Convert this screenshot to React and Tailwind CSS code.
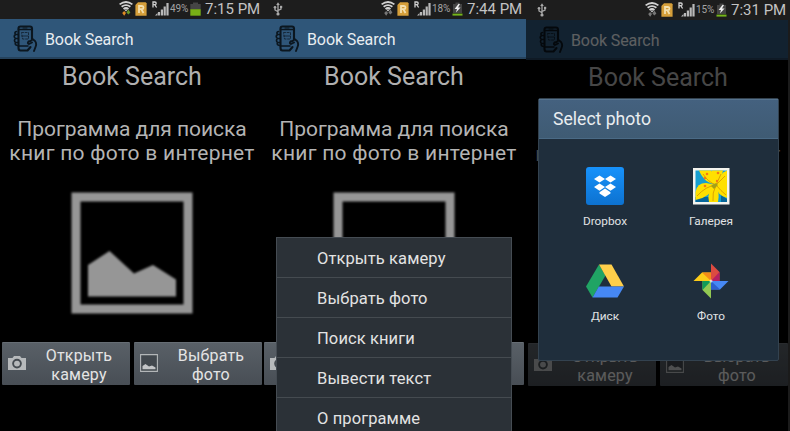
import React from "react";

const roboto = "font-[Roboto,'Noto_Sans',sans-serif]";

function UsbIcon() {
  return (
    <svg className="h-[14px] w-[10px]" viewBox="0 0 10 14" fill="none" stroke="#a9a9a9" strokeWidth="1.3">
      <path d="M5 12V2M5 9.800L2 8V5.500M5 8.500L8 7V5" />
      <path d="M5 0.300L6.800 3H3.200Z" fill="#a9a9a9" stroke="none" />
      <circle cx="5" cy="12" r="1.6" fill="#a9a9a9" stroke="none" />
      <circle cx="2" cy="5.2" r="1.3" fill="#a9a9a9" stroke="none" />
      <path d="M7 3.800H9.200V6H7Z" fill="#a9a9a9" stroke="none" />
    </svg>
  );
}

function WifiIcon({ active }) {
  return (
    <svg className="h-[15px] w-[14px]" viewBox="0 0 14 15" fill="none" stroke="#d2d2d2" strokeWidth="1.8">
      <path d="M0.600 3.400Q7 -1.400 13.400 3.400" />
      <path d="M2.600 5.800Q7 2.400 11.400 5.800" />
      <path d="M4.500 8Q7 6 9.500 8" />
      <path d="M5.300 8.600L7 10.600L8.700 8.600Z" fill="#d2d2d2" stroke="none" />
      <path d="M3.200 12L5.200 14.800L7 12L5.200 10Z" fill={active ? "#e08a24" : "#777"} stroke="none" />
      <path d="M7.400 11.500L9.400 8.500L11.400 11.500L9.400 13.500Z" fill={active ? "#67982a" : "#777"} stroke="none" />
    </svg>
  );
}

function SimIcon() {
  return (
    <svg className="h-[14px] w-[12px]" viewBox="0 0 12 14">
      <path d="M3 0.300H10.600L11.600 1.300V13.700H0.400V3Z" fill="#d69f3a" />
      <path d="M4 11V4H7Q8.500 4 8.500 5.600Q8.500 7.200 7 7.200H4M6.500 7.500L8.500 11" fill="none" stroke="#f3dfae" strokeWidth="1.8" />
    </svg>
  );
}

function SignalIcon() {
  return (
    <svg className="h-[15px] w-[17px]" viewBox="0 0 17 15">
      <path d="M1 6.500V1H2.900Q4.200 1 4.200 2.300Q4.200 3.700 2.900 3.700H1M2.800 3.700L4.600 6.500" fill="none" stroke="#cfcfcf" strokeWidth="1.3" />
      <g fill="#b9b9b9">
        <path d="M3 14.500L5.500 12V14.500Z" />
        <path d="M5.900 11H8.100V14.500H5.900Z" />
        <path d="M8.800 8.500H11V14.500H8.800Z" />
        <path d="M11.600 5.500H13.800V14.500H11.600Z" />
        <path d="M14.400 2H16.600V14.500H14.400Z" />
      </g>
    </svg>
  );
}

function BatteryIcon({ charging }) {
  if (charging) {
    return (
      <svg className="h-[14px] w-[11px]" viewBox="0 0 11 14">
        <path d="M3.500 0.500H7.500V2H10V11H1V2H3.500Z" fill="#444" />
        <path d="M0.500 11.600H10.500V13.600H0.500Z" fill="#76b51b" />
        <path d="M6.600 1.800L2.600 6.900H5L3.900 10.600L8.600 5.500H6L8 2Z" fill="#eee" />
      </svg>
    );
  }
  return (
    <svg className="h-[14px] w-[11px]" viewBox="0 0 11 14">
      <path d="M3 0.400H8V2H10.700V7.500H0.300V2H3Z" fill="#454545" />
      <path d="M0.300 7.200H10.700V13.700H0.300Z" fill="#78b016" />
    </svg>
  );
}

function StatusBar({ percent, time, charging }) {
  return (
    <div className="flex h-[19px] shrink-0 items-start bg-[#1d1d1d] pl-[11px]">
      <div className="mt-[2px] w-[108px]">{charging && <UsbIcon />}</div>
      <div className="mt-px w-[16px]"><WifiIcon active={!charging} /></div>
      <div className="mt-[2px] w-[17px]"><SimIcon /></div>
      <div className="mt-px w-[18px]"><SignalIcon /></div>
      <div className="mt-[2px] w-[20px] whitespace-nowrap text-[10px] leading-[14px] tracking-[-0.1px] text-[#a4a4a4]">{percent}</div>
      <div className="mt-[2px] w-[15px]"><BatteryIcon charging={charging} /></div>
      <div className="whitespace-nowrap text-[15px] leading-[18px] text-[#c3c3c3]">{time}</div>
    </div>
  );
}

function HandPhoneIcon() {
  return (
    <svg className="h-[28px] w-[25px]" viewBox="0 0 25 28" fill="none" stroke="#0b161f" strokeWidth="2.1" strokeLinejoin="round" strokeLinecap="round">
      <path d="M19 14V3.500Q19 1.500 17 1.500H7.500Q5.500 1.500 5.500 3.500V23Q5.500 25.500 7.500 25.500H14.500L17.500 22" />
      <path d="M5.500 4.500H19M6 21H15" strokeWidth="1.5" />
      <path d="M10 3H14" strokeWidth="1" />
      <path d="M3.500 6.500Q1 7 2.500 9.500H4.500M2.500 9.500Q0 11.500 2.500 13.500H4.500M2.500 13.500Q0.500 15.500 2.500 17.500H4.500M2.500 17.500Q1.500 20 4.500 20.500" strokeWidth="1.7" />
      <path d="M19.500 14L22 16Q24 18.500 22.500 22L21 26M19.500 14.500L17.500 16L15.500 16.500Q14 18.500 16 19L19 17.500" strokeWidth="1.9" />
      <path d="M8.500 7.500H15.500V14H9.500Z" strokeWidth="1" strokeDasharray="2 1.6" opacity=".7" />
      <path d="M9 11H15" strokeWidth="1" opacity=".7" />
    </svg>
  );
}

function CameraIcon() {
  return (
    <svg className="mb-[3px] h-[14px] w-[18px]" viewBox="0 0 18 14">
      <path d="M0 2H4.500L6 0H12L13.500 2H18V14H0Z" fill="#b6b9bb" />
      <circle cx="9" cy="7.600" r="3.900" fill="#b6b9bb" stroke="#454b51" strokeWidth="1.9" />
    </svg>
  );
}

function SmallPictureIcon() {
  return (
    <svg className="mb-[2px] h-[18px] w-[18px]" viewBox="0 0 18 18">
      <path d="M0.600 0.600H17.400V17.400H0.600Z" fill="#42484e" stroke="#b3b6b8" strokeWidth="1.1" />
      <path d="M2.500 15.200V12L5.500 10L9 12.600L12 11.500L15.500 13.500V15.200Z" fill="#c3c5c7" />
    </svg>
  );
}

function Placeholder() {
  return (
    <svg className="h-[122px] w-[122px] blur-[0.8px]" viewBox="0 0 122 122">
      <path d="M5 5H117V117H5Z" fill="none" stroke="#969696" strokeWidth="9" />
      <path d="M17 104.500V73L38.500 59L63 81.500L82 73L105 87.500V104.500Z" fill="#969696" />
    </svg>
  );
}

function ActionButton({ icon, lines, inset }) {
  return (
    <div className="flex h-[43px] w-[128px] items-center rounded-[1px] border-t border-[#666d74] bg-linear-to-b from-[#596067] to-[#484e55]">
      <div className={inset}>{icon}</div>
      <div className="flex-1 pr-[3px] pt-px text-center text-[16px] leading-[19px] tracking-[0.2px] text-[#e4e4e4]">
        <div>{lines[0]}</div>
        <div>{lines[1]}</div>
      </div>
    </div>
  );
}

function Phone({ status, className, children }) {
  return (
    <section className={"relative flex h-[431px] shrink-0 flex-col overflow-hidden bg-black " + className}>
      <StatusBar {...status} />
      <div className="relative flex-1">
        <header className="flex h-[40px] w-full items-center border-b-2 border-[#26435d] bg-[#2f5679] pl-[13px] pt-[2px]">
          <HandPhoneIcon />
          <span className="ml-[7px] mt-[2px] whitespace-nowrap text-[16px] leading-[20px] tracking-[-0.1px] text-[#e8edf1]">Book Search</span>
        </header>
        <main className="flex w-[264px] flex-col items-center">
          <h1 className="mt-[3px] text-[25px] leading-[30px] text-[#b0b0b0]">Book Search</h1>
          <p className="mt-[25px] whitespace-nowrap text-center text-[21px] leading-[24px] text-[#b4b4b4]">
            <span className="tracking-[-0.03px]">Программа для поиска</span>
            <br />
            <span className="tracking-[0.25px]">книг по фото в интернет</span>
          </p>
          <div className="mt-[27px]"><Placeholder /></div>
          <div className="mt-[28px] flex gap-[4px]">
            <ActionButton icon={<CameraIcon />} lines={["Открыть", "камеру"]} inset="w-[29px] pl-[6px]" />
            <ActionButton icon={<SmallPictureIcon />} lines={["Выбрать", "фото"]} inset="w-[29px] pl-[6px]" />
          </div>
        </main>
        {children}
      </div>
    </section>
  );
}

const menuItems = ["Открыть камеру", "Выбрать фото", "Поиск книги", "Вывести текст", "О программе"];

function OptionsMenu() {
  return (
    <ul className="absolute left-[14px] top-[218px] w-[236px] border border-[#454c53] bg-[#2b3137]">
      {menuItems.map((item) => (
        <li key={item} className="flex h-[40px] items-center border-b border-[#454b50] pl-[40px] pt-[3px] text-[16.500px] tracking-[0.1px] text-[#e3e3e3]">
          {item}
        </li>
      ))}
    </ul>
  );
}

function DropboxIcon() {
  return (
    <svg className="h-[38px] w-[38px]" viewBox="0 0 38 38">
      <defs>
        <linearGradient id="box" x2="0" y2="1"><stop stopColor="#1792fb" /><stop offset="1" stopColor="#0d72d0" /></linearGradient>
      </defs>
      <rect width="38" height="38" rx="3" fill="url(#box)" />
      <g fill="#fff">
        <path d="M13.500 8.500L19 12L13.500 15.600L8 12.100Z" />
        <path d="M24.500 8.500L30 12.100L24.500 15.600L19 12Z" />
        <path d="M13.500 16.400L19 20L13.500 23.700L8 20.100Z" />
        <path d="M24.500 16.400L30 20.100L24.500 23.700L19 20Z" />
        <path d="M19 21.600L24.500 25.200V26.500L19 30L13.500 26.500V25.200Z" />
      </g>
    </svg>
  );
}

function GalleryIcon() {
  return (
    <svg className="h-[38px] w-[38px]" viewBox="0 0 38 38">
      <path d="M1 1H37.500V37.500H1Z" fill="#f4f4ee" />
      <path d="M3.500 3.500H35V35H3.500Z" fill="#179fd0" />
      <path d="M3.500 30H18V35H3.500ZM29 28L35 32V35H29Z" fill="#08679a" />
      <g fill="#ffe000">
        <path d="M24 17Q13 17 7 3.500H19Q24 8 24 17Z" />
        <path d="M24 18Q17 31 3.500 33V25Q5 16 14 16Z" />
        <path d="M24 18Q14 25 17 35H26Q28 25 24 18Z" />
        <path d="M23 18Q18 8 20 3.500H31Q29 12 23 18Z" />
        <path d="M23 17Q28 6 35 3.500V18Z" />
        <path d="M22 17Q32 14 35 17V31Q26 29 22 17Z" />
      </g>
      <path d="M24 18Q16 15 11 7M24 18Q14 19 5 29M24 18Q20 26 21 34M24 18Q29 24 34 28M24 18L29 7M24 18L33 9" fill="none" stroke="#d99b00" strokeWidth=".9" />
      <path d="M19 19L24 16L26 18L22 22Z" fill="#a4a016" />
      <g fill="#f27a16"><circle cx="15" cy="7" r="1.300" /><circle cx="13" cy="11" r="1.300" /><circle cx="13" cy="19" r="1.300" /><circle cx="26" cy="6" r="1.300" /><circle cx="25" cy="14" r="1.200" /></g>
    </svg>
  );
}

function DriveIcon() {
  return (
    <svg className="h-[38px] w-[38px]" viewBox="0 0 38 38">
      <path d="M13 2.500L19.500 13.500L6.500 35.500L0 24.500Z" fill="#20a464" />
      <path d="M13 2.500H25.500L38 24.500H25.500Z" fill="#ffcf4a" />
      <path d="M12.800 24.500H38L31.500 35.500H6.500Z" fill="#4688f4" />
    </svg>
  );
}

function PhotosIcon() {
  return (
    <svg className="h-[38px] w-[38px]" viewBox="0 0 38 38">
      <path d="M19 1.500L27.500 10V19H19Z" fill="#db4b41" />
      <path d="M19 19L27.500 10V19Z" fill="#b51f62" />
      <path d="M19 19H36.500L28 27.500H19Z" fill="#4688f4" />
      <path d="M19 19L28 27.500H19Z" fill="#2e5fce" />
      <path d="M19 19V36.500L10.500 28V19Z" fill="#92c953" />
      <path d="M19 19L10.500 28V19Z" fill="#119b58" />
      <path d="M19 19H1.500L10 10.500H19Z" fill="#fdcc18" />
      <path d="M19 19L10 10.500H19Z" fill="#f58a18" />
      <circle cx="19" cy="19" r="1.500" fill="#fff" opacity=".7" />
    </svg>
  );
}

const apps = [
  ["Dropbox", DropboxIcon],
  ["Галерея", GalleryIcon],
  ["Диск", DriveIcon],
  ["Фото", PhotosIcon],
];

function SelectPhotoDialog() {
  return (
    <div className="absolute left-[12px] top-[78px] h-[263px] w-[241px] rounded-[2px] border border-[#33424f] bg-[#1f2e3c]">
      <h2 className="flex h-[40px] items-center border-b border-t border-b-[#4a6a85] border-t-[#56738e] bg-linear-to-b from-[#44617f] to-[#3f5b73] pl-[14px] pt-px text-[17.600px] text-[#e9edf0]">
        Select photo
      </h2>
      <div className="grid grid-cols-[106px_106px] pl-[13px] pt-[28px]">
        {apps.map(([name, Icon]) => (
          <div key={name} className="flex h-[95px] flex-col items-center">
            <Icon />
            <span className="mt-[9px] text-[11.800px] leading-[14px] text-[#e0e3e5]">{name}</span>
          </div>
        ))}
      </div>
    </div>
  );
}

export default function App() {
  return (
    <div className={"flex h-[431px] w-[790px] overflow-hidden bg-black " + roboto}>
      <Phone className="w-[262px]" status={{ percent: "49%", time: "7:15 PM", charging: false }} />
      <Phone className="w-[264px]" status={{ percent: "18%", time: "7:44 PM", charging: true }}>
        <OptionsMenu />
      </Phone>
      <div className="h-[431px] w-[264px] bg-[#1d1d1d] pt-px">
        <Phone className="w-[264px]" status={{ percent: "15%", time: "7:31 PM", charging: true }}>
          <div className="absolute inset-0 bg-black/60" />
          <div className="absolute inset-y-0 right-0 w-[2px] bg-[#1b1b1b]" />
          <SelectPhotoDialog />
        </Phone>
      </div>
    </div>
  );
}
